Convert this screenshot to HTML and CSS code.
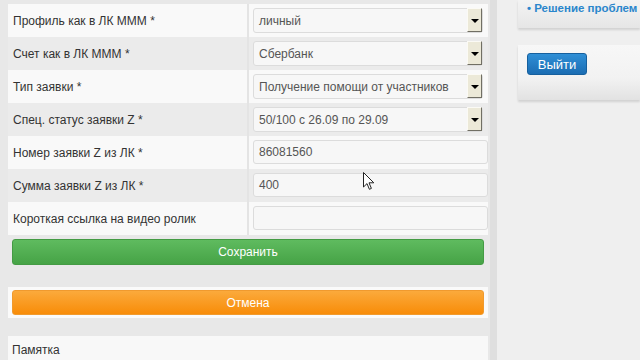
FILE: index.html
```html
<!DOCTYPE html>
<html lang="ru">
<head>
    <meta charset="UTF-8">
    <title>Заявка</title>
    <link rel="stylesheet" href="styles.css">
</head>
<body>
    <div class="page">
        <div class="main">
            <div class="form-table">
                <div class="row">
                    <div class="label">Профиль как в ЛК МММ *</div>
                    <div class="value">
                        <div class="select"><span>личный</span><span class="arrow"></span></div>
                    </div>
                </div>
                <div class="row alt">
                    <div class="label">Счет как в ЛК МММ *</div>
                    <div class="value">
                        <div class="select"><span>Сбербанк</span><span class="arrow"></span></div>
                    </div>
                </div>
                <div class="row">
                    <div class="label">Тип заявки *</div>
                    <div class="value">
                        <div class="select"><span>Получение помощи от участников</span><span class="arrow"></span></div>
                    </div>
                </div>
                <div class="row alt">
                    <div class="label">Спец. статус заявки Z *</div>
                    <div class="value">
                        <div class="select"><span>50/100 с 26.09 по 29.09</span><span class="arrow"></span></div>
                    </div>
                </div>
                <div class="row">
                    <div class="label">Номер заявки Z из ЛК *</div>
                    <div class="value"><div class="input">86081560</div></div>
                </div>
                <div class="row alt">
                    <div class="label">Сумма заявки Z из ЛК *</div>
                    <div class="value"><div class="input">400</div></div>
                </div>
                <div class="row">
                    <div class="label">Короткая ссылка на видео ролик</div>
                    <div class="value"><div class="input"></div></div>
                </div>
            </div>

            <div class="actions">
                <button class="btn btn-save">Сохранить</button>
                <div class="cancel-box">
                    <button class="btn btn-cancel">Отмена</button>
                </div>
            </div>

            <div class="memo">Памятка</div>
        </div>

        <div class="sidebar">
            <div class="side-panel links">
                <a class="side-link">• Решение проблем</a>
            </div>
            <div class="side-panel logout">
                <button class="btn-logout">Выйти</button>
            </div>
        </div>
    </div>

    <svg class="cursor" width="12" height="19" viewBox="0 0 12 19">
        <path d="M0.5 0.5 L0.5 15 L4 11.6 L6.4 17.3 L8.4 16.4 L6 10.8 L10.8 10.8 Z" fill="#fff" stroke="#222" stroke-width="1"/>
    </svg>
</body>
</html>
```

FILE: styles.css
```css
* {
    margin: 0;
    padding: 0;
    box-sizing: border-box;
}

body {
    font-family: "Liberation Sans", Arial, sans-serif;
    font-size: 12px;
    color: #333;
    background: #efefef;
    width: 640px;
    height: 360px;
    overflow: hidden;
    position: relative;
}

.page {
    display: flex;
    height: 360px;
}

.main {
    width: 497px;
    flex-shrink: 0;
    background: #e8e8e8;
    padding: 4px 2px 0 8px;
    border-right: 7px solid #dfdfdf;
}

.row {
    display: flex;
    height: 33px;
    background: #f9f9f9;
}

.row.alt {
    background: #ebebeb;
}

.label {
    width: 241px;
    padding-left: 5px;
    display: flex;
    align-items: center;
    border-right: 2px solid #e4e4e4;
}

.value {
    flex: 1;
    padding: 4px 0 0 4px;
}

.select {
    width: 230px;
    height: 25px;
    display: flex;
    align-items: center;
    justify-content: space-between;
    border: 1px solid #dcdcdc;
    border-radius: 3px;
    background: #f7f7f7;
    color: #555;
    padding-left: 5px;
}

.arrow {
    width: 15px;
    height: 24px;
    align-self: flex-end;
    background: #ece9d8;
    border-top: 1px solid #fbfaf5;
    border-left: 1px solid #fbfaf5;
    border-right: 1px solid #716f64;
    border-bottom: 1px solid #716f64;
    position: relative;
}

.arrow::after {
    content: "";
    position: absolute;
    left: 3px;
    top: 10px;
    border-left: 4px solid transparent;
    border-right: 4px solid transparent;
    border-top: 4px solid #000;
}

.input {
    width: 235px;
    height: 24px;
    border: 1px solid #dcdcdc;
    border-radius: 3px;
    background: #f7f7f7;
    color: #555;
    padding-left: 5px;
    line-height: 22px;
}

.actions {
    padding-top: 4px;
}

.btn {
    display: block;
    height: 26px;
    border: 1px solid;
    border-radius: 3px;
    color: #fff;
    font-family: inherit;
    font-size: 12px;
    cursor: pointer;
}

.btn-save {
    width: 472px;
    margin-left: 4px;
    background: linear-gradient(#5fbb5f, #46a346);
    border-color: #449b44;
}

.cancel-box {
    margin-top: 22px;
    background: #fafafa;
    padding: 3px 4px 3px 4px;
}

.btn-cancel {
    width: 472px;
    height: 25px;
    background: linear-gradient(#fbaa3c, #f88c08);
    border-color: #f09a2e;
}

.memo {
    margin-top: 18px;
    height: 40px;
    background: #f8f8f8;
    padding: 7px 0 0 4px;
}

.sidebar {
    flex: 1;
    padding-left: 21px;
}

.side-panel {
    background: linear-gradient(#f3f3f3, #e6e6e6);
    box-shadow: 0 2px 2px rgba(0, 0, 0, 0.12);
}

.links {
    height: 28px;
    padding: 1px 0 0 9px;
}

.side-link {
    color: #2a86cc;
    font-weight: bold;
    font-size: 11.5px;
    white-space: nowrap;
}

.logout {
    margin-top: 17px;
    height: 55px;
    padding: 8px 0 0 9px;
    background: linear-gradient(#f7f7f7 0%, #f2f2f2 60%, #e2e2e2 100%);
}

.btn-logout {
    width: 60px;
    height: 22px;
    border: 1px solid #16609e;
    border-radius: 3px;
    background: linear-gradient(#2f8fd6, #1b6db3);
    color: #fff;
    font-family: inherit;
    font-size: 13px;
}

.cursor {
    position: absolute;
    left: 363px;
    top: 172px;
}
```
